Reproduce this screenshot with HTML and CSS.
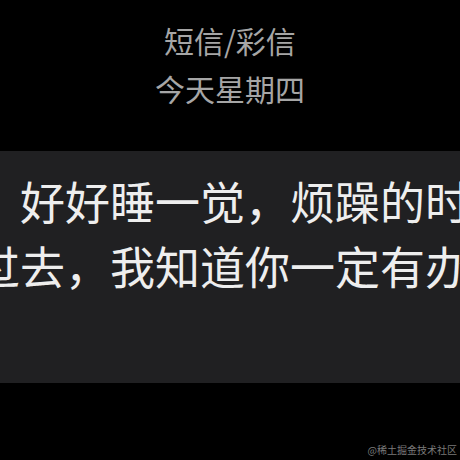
FILE: index.html
```html
<!DOCTYPE html>
<html lang="zh-CN">
<head>
<meta charset="utf-8">
<link rel="stylesheet" href="styles.css">
</head>
<body>
<div class="screen">
  <header class="header">
    <div class="title">短信/彩信</div>
    <div class="date">今天星期四</div>
  </header>
  <section class="bubble">
    <div class="line">，好好睡一觉，烦躁的时候</div>
    <div class="line">过去，我知道你一定有办法</div>
  </section>
  <div class="watermark">@稀土掘金技术社区</div>
</div>
</body>
</html>
```
FILE: styles.css
```css
html, body {
  margin: 0;
  padding: 0;
  background: #000;
}
.screen {
  position: relative;
  width: 460px;
  height: 460px;
  overflow: hidden;
  background: #000;
  font-family: "Noto Sans CJK SC", "Noto Sans", sans-serif;
}
.header {
  padding-top: 16px;
  display: flex;
  flex-direction: column;
  align-items: center;
  color: #a6a6a6;
  font-size: 30px;
  line-height: 48px;
}
.bubble {
  margin-top: 39px;
  height: 232px;
  box-sizing: border-box;
  padding-top: 17px;
  background: #202022;
  color: #eeeeee;
  font-size: 45px;
  line-height: 65px;
  overflow: hidden;
}
.line {
  margin-left: -25px;
  white-space: nowrap;
}
.watermark {
  position: absolute;
  right: 3px;
  bottom: 3px;
  font-size: 10px;
  line-height: 14px;
  color: #7a7a7a;
}
```
